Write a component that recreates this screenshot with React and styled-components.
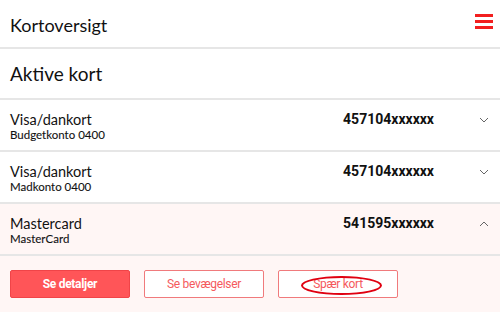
import React from 'react';
import styled, { createGlobalStyle } from 'styled-components';

const GlobalStyle = createGlobalStyle`
  body {
    margin: 0;
    background: #fff;
    font-family: 'Lato', sans-serif;
    color: #111;
  }
`;

const Page = styled.div`
  width: 500px;
  height: 312px;
  overflow: hidden;
  background: #fff;
`;

const Header = styled.div`
  display: flex;
  align-items: center;
  justify-content: space-between;
  height: 47px;
  padding: 0 7px 0 10px;
  border-bottom: 2px solid #e6e6e6;
`;

const Title = styled.h1`
  margin: 0;
  font-size: 18px;
  font-weight: 400;
  padding-top: 2px;
`;

const Burger = styled.div`
  display: flex;
  flex-direction: column;
  gap: 3px;
  width: 18px;
  margin-top: -5px;
  span {
    display: block;
    height: 3px;
    background: #f21f1f;
  }
`;

const Section = styled.h2`
  margin: 0;
  height: 49px;
  display: flex;
  align-items: center;
  padding: 0 10px;
  font-size: 19px;
  font-weight: 400;
  border-bottom: 2px solid #e6e6e6;
`;

const Row = styled.div`
  display: flex;
  align-items: flex-start;
  height: 39px;
  padding: 11px 11px 0 10px;
  border-bottom: 2px solid #e6e6e6;
  background: ${(p) => (p.$open ? '#fff6f5' : '#fff')};
`;

const Names = styled.div`
  flex: 1;
  display: flex;
  flex-direction: column;
`;

const CardName = styled.div`
  font-size: 14.5px;
  line-height: 17px;
`;

const Account = styled.div`
  font-size: 11.5px;
  line-height: 14px;
  -webkit-text-stroke: 0.1px #111;
`;

const Number = styled.div`
  font-family: 'Roboto', sans-serif;
  font-weight: 700;
  font-size: 14px;
  line-height: 17px;
  margin-right: 45px;
`;

const Chevron = styled.svg`
  width: 10px;
  height: 6px;
  margin-top: 6px;
`;

const Actions = styled.div`
  display: flex;
  gap: 14px;
  padding: 14px 10px 0;
  height: 43px;
  background: #fff6f5;
`;

const Button = styled.div`
  position: relative;
  width: 120px;
  height: 28px;
  box-sizing: border-box;
  display: flex;
  align-items: center;
  justify-content: center;
  border-radius: 2px;
  border: 1px solid ${(p) => (p.$primary ? '#f04448' : '#f07a7c')};
  background: ${(p) => (p.$primary ? '#ff5558' : '#fff')};
  color: ${(p) => (p.$primary ? '#fff' : '#f55a5d')};
  font-family: 'Roboto', sans-serif;
  font-size: 12px;
  font-weight: ${(p) => (p.$primary ? 700 : 400)};
  letter-spacing: -0.3px;
`;

const Marker = styled.span`
  position: absolute;
  left: 22px;
  top: 5px;
  width: 77px;
  height: 15px;
  border: 2px solid #e00010;
  border-radius: 50%;
`;

const cards = [
  { name: 'Visa/dankort', account: 'Budgetkonto 0400', number: '457104xxxxxx' },
  { name: 'Visa/dankort', account: 'Madkonto 0400', number: '457104xxxxxx' },
  { name: 'Mastercard', account: 'MasterCard', number: '541595xxxxxx', open: true },
];

export default function App() {
  return (
    <Page>
      <GlobalStyle />
      <Header>
        <Title>Kortoversigt</Title>
        <Burger>
          <span />
          <span />
          <span />
        </Burger>
      </Header>
      <Section>Aktive kort</Section>
      {cards.map((c, i) => (
        <Row key={i} $open={c.open}>
          <Names>
            <CardName>{c.name}</CardName>
            <Account>{c.account}</Account>
          </Names>
          <Number>{c.number}</Number>
          <Chevron viewBox="0 0 10 6">
            <path
              d={c.open ? 'M1 5 L5 1 L9 5' : 'M1 1 L5 5 L9 1'}
              fill="none"
              stroke="#666"
              strokeWidth="1"
            />
          </Chevron>
        </Row>
      ))}
      <Actions>
        <Button $primary>Se detaljer</Button>
        <Button>Se bevægelser</Button>
        <Button>
          Spær kort
          <Marker />
        </Button>
      </Actions>
    </Page>
  );
}
